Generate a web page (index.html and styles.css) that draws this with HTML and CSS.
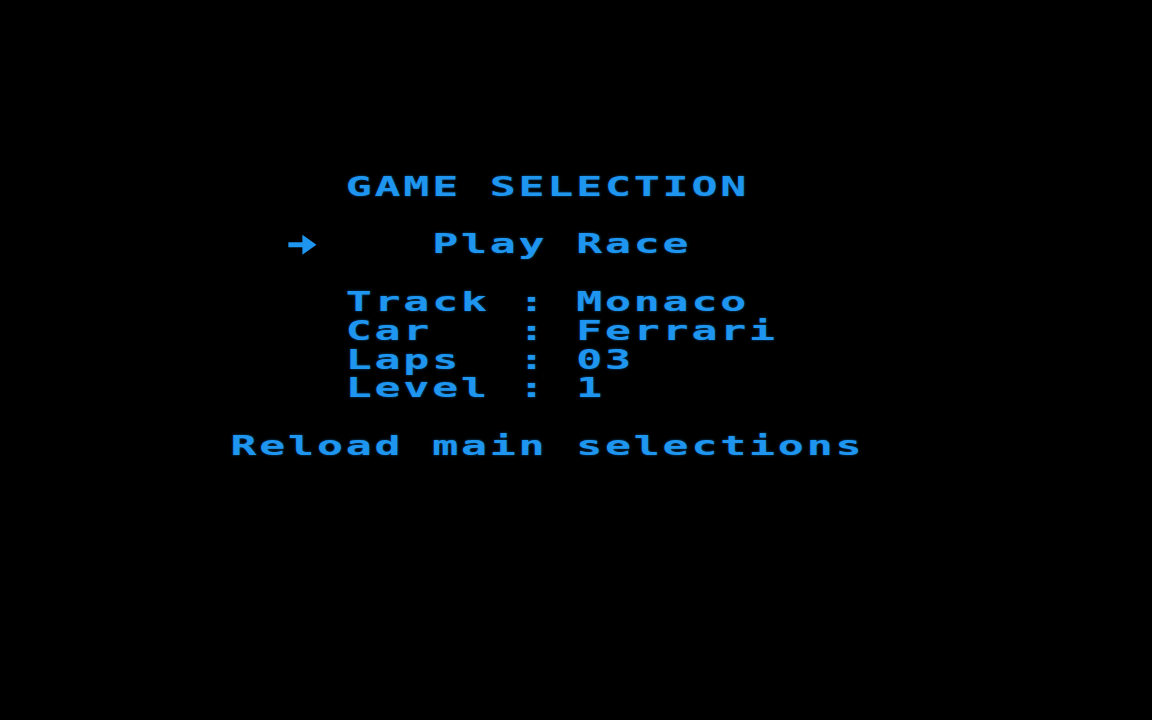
FILE: index.html
```html
<!DOCTYPE html>
<html>
<head>
<meta charset="utf-8">
<link rel="stylesheet" href="styles.css">
</head>
<body>
<main class="screen">
  <div class="text">
    <div class="line">            GAME SELECTION</div>
    <div class="line"> </div>
    <div class="line">          <span class="arrow"><svg viewBox="0 0 8 8" preserveAspectRatio="none" width="100%" height="100%"><rect x="0.1" y="3.4" width="5" height="1.4"/><polygon points="4,1.3 7.9,4.1 4,6.9"/></svg></span><span class="gap">    </span>Play Race</div>
    <div class="line"> </div>
    <div class="line">            Track : Monaco</div>
    <div class="line">            Car   : Ferrari</div>
    <div class="line">            Laps  : 03</div>
    <div class="line">            Level : 1</div>
    <div class="line"> </div>
    <div class="line">        Reload main selections</div>
  </div>
</main>
</body>
</html>
```
FILE: styles.css
```css
html, body {
  margin: 0;
  padding: 0;
  background: #000;
  height: 100%;
}
.screen {
  width: 1152px;
  height: 720px;
  background: #000;
  overflow: hidden;
  padding-top: 172.8px;
  box-sizing: border-box;
}
.text {
  font-family: "DejaVu Sans Mono", monospace;
  font-weight: bold;
  font-size: 27px;
  line-height: 28.8px;
  letter-spacing: 1.75px;
  color: #1e96f0;
  text-shadow: 0 0 2px rgba(30, 150, 240, 0.55);
  transform: scaleX(1.6);
  transform-origin: 0 0;
}
.line {
  height: 28.8px;
  white-space: pre;
}
.arrow {
  display: inline-block;
  width: 18px;
  height: 28.8px;
  vertical-align: top;
}
.arrow svg {
  display: block;
  fill: #1e96f0;
}
```
